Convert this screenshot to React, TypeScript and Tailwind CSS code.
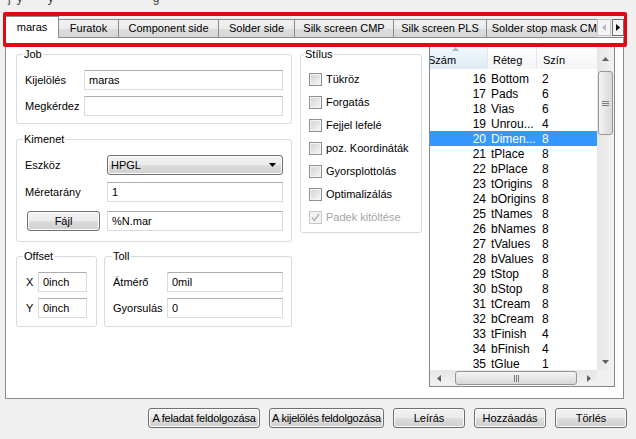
import React from 'react';

const font = "font-['Liberation_Sans',Arial,sans-serif]";

const btn =
  'flex h-[20px] items-center justify-center whitespace-nowrap rounded-[3px] border border-[#707070] bg-[linear-gradient(to_bottom,#f2f2f2_0%,#ebebeb_50%,#dddddd_51%,#cfcfcf_100%)] text-[11px] text-black shadow-[inset_0_0_0_1px_#fbfbfb]';

const field =
  'flex h-[20px] items-center border border-[#d8dbe0] border-t-[#abadb3] bg-white px-[4px] text-[11px] text-black';

type Layer = { num: number; name: string; color: number };

const layers: Layer[] = [
  { num: 16, name: 'Bottom', color: 2 },
  { num: 17, name: 'Pads', color: 6 },
  { num: 18, name: 'Vias', color: 6 },
  { num: 19, name: 'Unrou...', color: 4 },
  { num: 20, name: 'Dimen...', color: 8 },
  { num: 21, name: 'tPlace', color: 8 },
  { num: 22, name: 'bPlace', color: 8 },
  { num: 23, name: 'tOrigins', color: 8 },
  { num: 24, name: 'bOrigins', color: 8 },
  { num: 25, name: 'tNames', color: 8 },
  { num: 26, name: 'bNames', color: 8 },
  { num: 27, name: 'tValues', color: 8 },
  { num: 28, name: 'bValues', color: 8 },
  { num: 29, name: 'tStop', color: 8 },
  { num: 30, name: 'bStop', color: 8 },
  { num: 31, name: 'tCream', color: 8 },
  { num: 32, name: 'bCream', color: 8 },
  { num: 33, name: 'tFinish', color: 4 },
  { num: 34, name: 'bFinish', color: 4 },
  { num: 35, name: 'tGlue', color: 1 },
];

const tabs = [
  { label: 'Furatok', w: 'w-[61px]' },
  { label: 'Component side', w: 'w-[101px]' },
  { label: 'Solder side', w: 'w-[77px]' },
  { label: 'Silk screen CMP', w: 'w-[100px]' },
  { label: 'Silk screen PLS', w: 'w-[94px]' },
  { label: 'Solder stop mask CMP', w: 'w-[124px]' },
];

const Arrow = ({ dir, color = '#606060' }: { dir: 'up' | 'down' | 'left' | 'right'; color?: string }) => {
  const pts = {
    up: '0,4 3.5,0 7,4',
    down: '0,0 7,0 3.5,4',
    left: '4,0 4,7 0,3.5',
    right: '0,0 4,3.5 0,7',
  }[dir];
  const vertical = dir === 'up' || dir === 'down';
  return (
    <svg width={vertical ? 7 : 4} height={vertical ? 4 : 7} viewBox={vertical ? '0 0 7 4' : '0 0 4 7'}>
      <polygon points={pts} fill={color} />
    </svg>
  );
};

const GroupBox = ({
  title,
  className,
  legendClass = 'ml-[6px]',
  children,
}: {
  title: string;
  className: string;
  legendClass?: string;
  children: React.ReactNode;
}) => (
  <fieldset className={`rounded-[3px] border border-[#d5dbe0] ${className}`}>
    <legend className={`${legendClass} px-[1px] text-[11px] leading-[14px] text-black`}>{title}</legend>
    {children}
  </fieldset>
);

const CheckBox = ({ label, checked, disabled }: { label: string; checked?: boolean; disabled?: boolean }) => (
  <div className="flex h-[23px] items-center">
    <span
      className={`flex h-[13px] w-[13px] items-center justify-center border ${
        disabled
          ? 'border-[#c8c8c8] bg-[#f4f4f4]'
          : 'border-[#8e8f8f] bg-[linear-gradient(135deg,#cfd1d4,#f7f7f7)] shadow-[inset_0_0_0_1px_#f4f4f4]'
      }`}
    >
      {checked && (
        <svg width="9" height="9" viewBox="0 0 9 9">
          <path d="M1 4.5 L3.5 7.5 L8 1" stroke={disabled ? '#b8b8b8' : '#333'} strokeWidth="1.6" fill="none" />
        </svg>
      )}
    </span>
    <span className={`ml-[4px] text-[11px] ${disabled ? 'text-[#a3a3a3]' : 'text-black'}`}>{label}</span>
  </div>
);

const LayerList = () => (
  <div className="flex h-[342px] w-[186px] flex-col border border-[#828790] bg-white">
    <div className="flex min-h-0 flex-1">
      <div className="flex w-[167px] flex-col overflow-hidden">
        <div className="flex h-[23px] shrink-0 text-[11px] text-black">
          <div className="relative flex w-[58px] items-center overflow-hidden border-r border-[#dfe6ee] bg-[linear-gradient(to_bottom,#f2f8fd,#dfeaf6)] pt-[6px]">
            <span className="-ml-[2px]">Szám</span>
            <span className="absolute left-[22px] top-[1px]">
              <Arrow dir="up" color="#aab8c8" />
            </span>
          </div>
          <div className="flex w-[49px] items-center border-r border-[#e5e5e5] bg-[linear-gradient(to_bottom,#ffffff,#f3f4f6)] pl-[5px] pt-[6px]">
            Réteg
          </div>
          <div className="flex w-[60px] items-center bg-[linear-gradient(to_bottom,#ffffff,#f3f4f6)] pl-[6px] pt-[6px]">
            Szín
          </div>
        </div>
        <div className="pt-[2px] text-[12px]">
          {layers.map((l) => {
            const sel = l.num === 20;
            return (
              <div key={l.num} className={`flex h-[15px] items-center ${sel ? 'bg-[#3399ff] text-white' : 'text-black'}`}>
                <span className="w-[58px] pr-[2px] text-right">{l.num}</span>
                <span className="w-[49px] overflow-hidden whitespace-nowrap pl-[3px]">{l.name}</span>
                <span className="w-[60px] pl-[5px]">{l.color}</span>
              </div>
            );
          })}
        </div>
      </div>
      {/* vertical scrollbar */}
      <div className="flex w-[17px] flex-col bg-[linear-gradient(to_right,#e6e6e6,#f2f2f2)]">
        <div className="flex h-[23px] items-center justify-center pt-[2px]">
          <Arrow dir="up" />
        </div>
        <div className="flex-1 px-[1px] pt-[2px]">
          <div className="flex h-[64px] items-center justify-center rounded-[3px] border border-[#979797] bg-[linear-gradient(to_right,#f4f4f4,#e6e6e6_50%,#d8d8d8)]">
            <div className="flex flex-col gap-[1px]">
              <div className="h-px w-[7px] bg-[#7b7b7b]" />
              <div className="h-px w-[7px] bg-[#7b7b7b]" />
              <div className="h-px w-[7px] bg-[#7b7b7b]" />
            </div>
          </div>
        </div>
        <div className="flex h-[16px] items-center justify-center">
          <Arrow dir="down" />
        </div>
      </div>
    </div>
    {/* horizontal scrollbar */}
    <div className="flex h-[16px] shrink-0">
      <div className="flex flex-1 bg-[linear-gradient(to_bottom,#e6e6e6,#f2f2f2)]">
        <div className="flex w-[17px] items-center justify-center">
          <Arrow dir="left" />
        </div>
        <div className="flex-1 py-[1px] pl-[8px] pr-[3px]">
          <div className="flex h-full items-center justify-center rounded-[3px] border border-[#979797] bg-[linear-gradient(to_bottom,#f4f4f4,#e6e6e6_50%,#d8d8d8)]">
            <div className="flex gap-[1px]">
              <div className="h-[7px] w-px bg-[#7b7b7b]" />
              <div className="h-[7px] w-px bg-[#7b7b7b]" />
              <div className="h-[7px] w-px bg-[#7b7b7b]" />
            </div>
          </div>
        </div>
        <div className="flex w-[17px] items-center justify-center">
          <Arrow dir="right" />
        </div>
      </div>
      <div className="w-[17px] bg-[#f0f0f0]" />
    </div>
  </div>
);

const App = () => {
  return (
    <div className={`relative h-[439px] w-[636px] overflow-hidden bg-[#f0f0f0] ${font}`}>
      {/* clipped line above the tabs */}
      <div className="h-[16px]">
        <div className="h-[6px] overflow-hidden text-[12px] leading-[14px] text-[#444]">
          <div className="-mt-[9px] flex">
            <span className="ml-[8px]">j</span>
            <span className="ml-[6px]">y</span>
            <span className="ml-[25px]">y</span>
            <span className="ml-[99px]">g</span>
          </div>
        </div>
      </div>

      {/* tab strip */}
      <div className="relative z-10 ml-[5px] flex h-[22px] w-[619px]">
        <div className="flex w-[592px] items-start overflow-hidden">
          <div className="flex h-[22px] w-[54px] shrink-0 items-center justify-center border border-b-0 border-[#898c95] bg-white pb-[1px] text-[11px] text-black">
            maras
          </div>
          {tabs.map((t) => (
            <div
              key={t.label}
              className={`-ml-px mt-[3px] flex h-[18px] ${t.w} shrink-0 items-center justify-center whitespace-nowrap border border-b-0 border-[#898c95] bg-[linear-gradient(to_bottom,#f2f2f2_0%,#ebebeb_50%,#dddddd_51%,#d6d6d6_100%)] text-[11px] text-black first-of-type:ml-0`}
            >
              {t.label}
            </div>
          ))}
        </div>
        <div className="mt-[3px] flex h-[17px]">
          <div className="flex w-[14px] items-center justify-center border border-[#c4c4c4] bg-[#f4f4f4]">
            <Arrow dir="left" color="#b9b9b9" />
          </div>
          <div className="ml-px flex w-[12px] items-center justify-center border border-[#707070] bg-[#f4f4f4]">
            <Arrow dir="right" color="#000" />
          </div>
        </div>
      </div>

      {/* tab page */}
      <div className="-mt-px ml-[5px] flex h-[362px] w-[619px] border border-[#898c95] bg-white pl-[10px] pt-[7px]">
        <div className="mt-[2px] flex w-[276px] flex-col">
          <GroupBox title="Job" className="h-[77px]">
            <div className="px-[8px] text-[11px] text-black">
              <div className="mt-[9px] flex h-[20px] items-center">
                <span className="w-[59px]">Kijelölés</span>
                <div className={`${field} w-[199px]`}>maras</div>
              </div>
              <div className="mt-[6px] flex h-[20px] items-center">
                <span className="w-[59px]">Megkérdez</span>
                <div className={`${field} w-[199px]`} />
              </div>
            </div>
          </GroupBox>

          <GroupBox title="Kimenet" className="mt-[8px] h-[110px]">
            <div className="px-[8px] text-[11px] text-black">
              <div className="mt-[9px] flex h-[20px] items-center">
                <span className="w-[82px]">Eszköz</span>
                <div className={`${btn} w-[176px] !justify-between pl-[3px] pr-[6px]`}>
                  <span>HPGL</span>
                  <Arrow dir="down" color="#000" />
                </div>
              </div>
              <div className="mt-[7px] flex h-[20px] items-center">
                <span className="w-[82px]">Méretarány</span>
                <div className={`${field} w-[176px]`}>1</div>
              </div>
              <div className="mt-[9px] flex h-[20px] items-center">
                <div className="w-[82px]">
                  <div className={`${btn} ml-[2px] w-[73px]`}>Fájl</div>
                </div>
                <div className={`${field} w-[176px]`}>%N.mar</div>
              </div>
            </div>
          </GroupBox>

          <div className="mt-[7px] flex">
            <GroupBox title="Offset" className="h-[78px] w-[81px]">
              <div className="pl-[9px] text-[11px] text-black">
                <div className="mt-[9px] flex h-[20px] items-center">
                  <span className="w-[12px]">X</span>
                  <div className={`${field} w-[49px]`}>0inch</div>
                </div>
                <div className="mt-[6px] flex h-[20px] items-center">
                  <span className="w-[12px]">Y</span>
                  <div className={`${field} w-[49px]`}>0inch</div>
                </div>
              </div>
            </GroupBox>
            <GroupBox title="Toll" className="ml-[7px] h-[78px] w-[188px]" legendClass="ml-[7px]">
              <div className="pl-[8px] text-[11px] text-black">
                <div className="mt-[9px] flex h-[20px] items-center">
                  <span className="w-[54px]">Átmérő</span>
                  <div className={`${field} w-[116px]`}>0mil</div>
                </div>
                <div className="mt-[6px] flex h-[20px] items-center">
                  <span className="w-[54px]">Gyorsulás</span>
                  <div className={`${field} w-[116px]`}>0</div>
                </div>
              </div>
            </GroupBox>
          </div>
        </div>

        <GroupBox title="Stílus" className="ml-[8px] mt-[2px] h-[186px] w-[122px]" legendClass="ml-[3px]">
          <div className="mt-[7px] pl-[8px]">
            <CheckBox label="Tükröz" />
            <CheckBox label="Forgatás" />
            <CheckBox label="Fejjel lefelé" />
            <CheckBox label="poz. Koordináták" />
            <CheckBox label="Gyorsplottolás" />
            <CheckBox label="Optimalizálás" />
            <CheckBox label="Padek kitöltése" checked disabled />
          </div>
        </GroupBox>

        <div className="ml-[7px]">
          <LayerList />
        </div>
      </div>

      {/* dialog buttons */}
      <div className="mt-[9px] flex justify-end gap-[9px] pr-[9px]">
        <div className={`${btn} w-[112px] tracking-[-0.2px]`}>A feladat feldolgozása</div>
        <div className={`${btn} w-[115px] tracking-[-0.2px]`}>A kijelölés feldolgozása</div>
        <div className={`${btn} w-[72px]`}>Leírás</div>
        <div className={`${btn} w-[72px]`}>Hozzáadás</div>
        <div className={`${btn} w-[72px]`}>Törlés</div>
      </div>

      {/* red highlight frame around the tab strip */}
      <div className="pointer-events-none absolute left-[3px] top-[12px] z-20 h-[35px] w-[624px] rounded-[2px] border-x-[3px] border-y-[4px] border-[#dd0a14]" />
    </div>
  );
};

export default App;
